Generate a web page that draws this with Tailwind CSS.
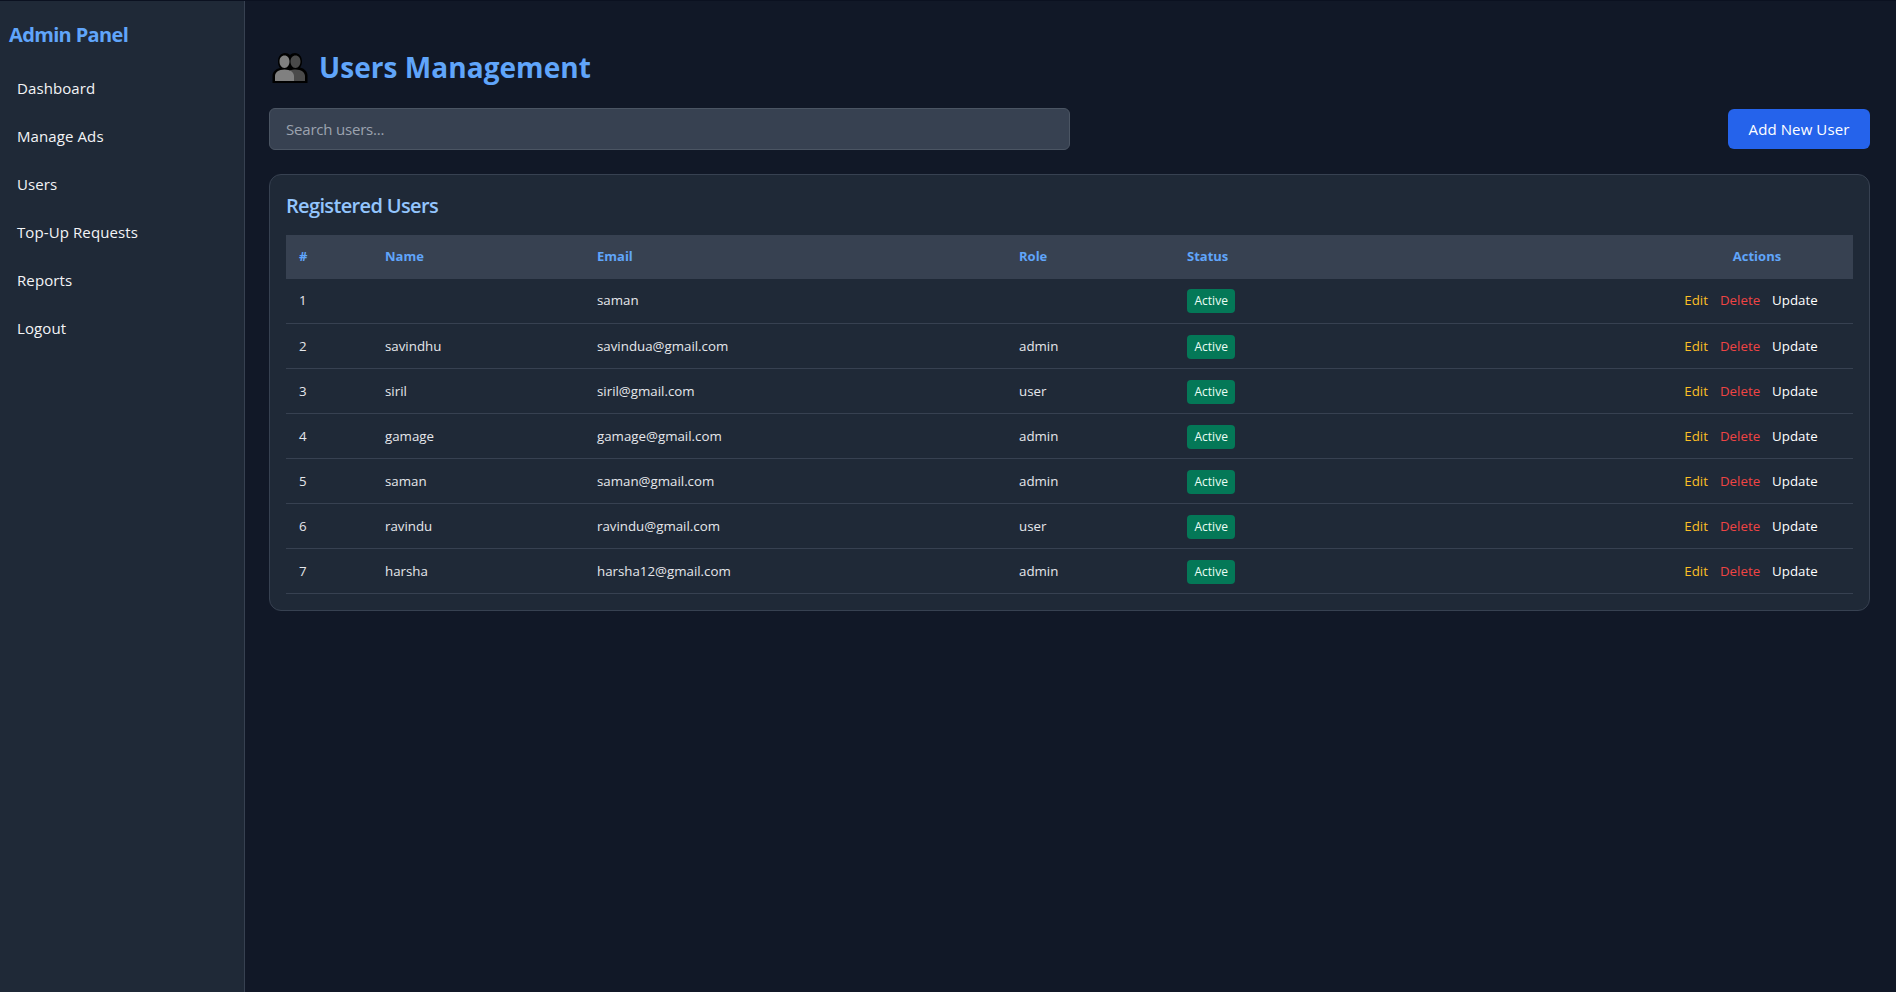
<!DOCTYPE html>
<html><head><meta charset="utf-8"><script src="https://cdn.jsdelivr.net/npm/@tailwindcss/browser@4"></script><title>Users Management</title></head>
<body class="bg-[#111827] font-['Open_Sans','Noto_Sans',sans-serif] text-white">
<div class="flex h-[992px] border-t border-[#0b1120]">
<aside class="w-[245px] shrink-0 bg-[#1f2937] border-r border-[#374151] px-[9px]">
<h2 class="mt-[20px] mb-[15px] text-xl leading-[28px] font-bold text-[#60a5fa] tracking-[-0.65px]">Admin Panel</h2>
<nav class="flex flex-col text-[15px] tracking-[0.1px] text-[#f3f4f6]">
<a class="px-2 py-3 leading-6">Dashboard</a>
<a class="px-2 py-3 leading-6">Manage Ads</a>
<a class="px-2 py-3 leading-6">Users</a>
<a class="px-2 py-3 leading-6">Top-Up Requests</a>
<a class="px-2 py-3 leading-6">Reports</a>
<a class="px-2 py-3 leading-6">Logout</a>
</nav>
</aside>
<main class="flex-1 pl-[24px] pr-[26px] pt-[46px]">
<h1 class="flex items-center gap-[11px] h-[40px] text-[28px] font-bold text-[#60a5fa] tracking-[0.05px]">
<svg class="ml-[3px] mt-[2px]" width="36" height="32" viewBox="0 0 36 32"><path d="M23 1c4 0 7 3.500 7 8.500 0 2.500-.8 4.500-2 6 4.500 1 7.500 4 7.500 8v7.500H.5V24c0-4 3-7 7.500-8-1.200-1.500-2-3.500-2-6.500C6 4.500 9 1 13 1c2 0 3.800.8 5 2 1.200-1.200 3-2 5-2z" fill="#000"/><path d="M23.500 3.500c3 0 5 2.600 5 6s-2 6.500-5 6.500-5-3-5-6.500 2-6 5-6zM18 18.300c1.500-.5 3.500-.8 5.500-.8 5.500 0 9.500 2.800 9.500 6.500v5H18z" fill="#4a4a4a"/><path d="M12.500 3.500c3 0 5 2.600 5 6s-2 6.500-5 6.500-5-3-5-6.500 2-6 5-6zM12.500 17.500c5.500 0 9.500 2.800 9.500 6.500v5H3v-5c0-3.700 4-6.500 9.500-6.500z" fill="#808080"/></svg>
<span>Users Management</span></h1>
<div class="flex justify-between items-center mt-[21px]">
<input placeholder="Search users..." class="w-[801px] h-[42px] px-4 rounded-md bg-[#374151] border border-[#4b5563] text-[15px] tracking-[-0.2px] placeholder:text-[#9ca3af]">
<button class="w-[142px] h-[40px] rounded-md bg-[#2563eb] text-[15px] font-medium tracking-[0.1px] text-white">Add New User</button>
</div>
<section class="mt-[24px] bg-[#1f2937] border border-[#374151] rounded-xl p-4">
<h2 class="text-[20px] leading-[28px] font-semibold text-[#93c5fd] tracking-[-0.65px] mt-[1px] mb-[15px]">Registered Users</h2>
<table class="w-full table-fixed text-[13.3px] text-[#e5e7eb]">
<colgroup><col class="w-[86px]"><col class="w-[212px]"><col class="w-[422px]"><col class="w-[168px]"><col class="w-[487px]"><col class="w-[192px]"></colgroup>
<thead class="bg-[#374151] text-[#60a5fa] text-left text-[13px]">
<tr class="h-[44px]"><th class="pl-[13px] font-bold">#</th><th class="pl-[13px] font-bold">Name</th><th class="pl-[13px] font-bold">Email</th><th class="pl-[13px] font-bold">Role</th><th class="pl-[13px] font-bold">Status</th><th class="px-3 font-bold text-center">Actions</th></tr>
</thead>
<tbody>
<tr class="h-[44px] border-b border-[#374151] [&_td]:pt-[1px]"><td class="pl-[13px]">1</td><td class="pl-[13px]"></td><td class="pl-[13px]">saman</td><td class="pl-[13px]"></td><td class="pl-[13px]"><span class="inline-block bg-[#047857] rounded px-[7.5px] leading-[24px] text-xs text-[#ecfdf5]">Active</span></td><td class="px-3 text-center"><a class="mr-3 text-[#fbbf24]">Edit</a><a class="mr-3 text-[#ef4444]">Delete</a><a class="mr-3 text-white">Update</a></td></tr>
<tr class="h-[45px] border-b border-[#374151] [&_td]:pt-[2px]"><td class="pl-[13px]">2</td><td class="pl-[13px]">savindhu</td><td class="pl-[13px]">savindua@gmail.com</td><td class="pl-[13px]">admin</td><td class="pl-[13px]"><span class="inline-block bg-[#047857] rounded px-[7.5px] leading-[24px] text-xs text-[#ecfdf5]">Active</span></td><td class="px-3 text-center"><a class="mr-3 text-[#fbbf24]">Edit</a><a class="mr-3 text-[#ef4444]">Delete</a><a class="mr-3 text-white">Update</a></td></tr>
<tr class="h-[45px] border-b border-[#374151] [&_td]:pt-[2px]"><td class="pl-[13px]">3</td><td class="pl-[13px]">siril</td><td class="pl-[13px]">siril@gmail.com</td><td class="pl-[13px]">user</td><td class="pl-[13px]"><span class="inline-block bg-[#047857] rounded px-[7.5px] leading-[24px] text-xs text-[#ecfdf5]">Active</span></td><td class="px-3 text-center"><a class="mr-3 text-[#fbbf24]">Edit</a><a class="mr-3 text-[#ef4444]">Delete</a><a class="mr-3 text-white">Update</a></td></tr>
<tr class="h-[45px] border-b border-[#374151] [&_td]:pt-[2px]"><td class="pl-[13px]">4</td><td class="pl-[13px]">gamage</td><td class="pl-[13px]">gamage@gmail.com</td><td class="pl-[13px]">admin</td><td class="pl-[13px]"><span class="inline-block bg-[#047857] rounded px-[7.5px] leading-[24px] text-xs text-[#ecfdf5]">Active</span></td><td class="px-3 text-center"><a class="mr-3 text-[#fbbf24]">Edit</a><a class="mr-3 text-[#ef4444]">Delete</a><a class="mr-3 text-white">Update</a></td></tr>
<tr class="h-[45px] border-b border-[#374151] [&_td]:pt-[2px]"><td class="pl-[13px]">5</td><td class="pl-[13px]">saman</td><td class="pl-[13px]">saman@gmail.com</td><td class="pl-[13px]">admin</td><td class="pl-[13px]"><span class="inline-block bg-[#047857] rounded px-[7.5px] leading-[24px] text-xs text-[#ecfdf5]">Active</span></td><td class="px-3 text-center"><a class="mr-3 text-[#fbbf24]">Edit</a><a class="mr-3 text-[#ef4444]">Delete</a><a class="mr-3 text-white">Update</a></td></tr>
<tr class="h-[45px] border-b border-[#374151] [&_td]:pt-[2px]"><td class="pl-[13px]">6</td><td class="pl-[13px]">ravindu</td><td class="pl-[13px]">ravindu@gmail.com</td><td class="pl-[13px]">user</td><td class="pl-[13px]"><span class="inline-block bg-[#047857] rounded px-[7.5px] leading-[24px] text-xs text-[#ecfdf5]">Active</span></td><td class="px-3 text-center"><a class="mr-3 text-[#fbbf24]">Edit</a><a class="mr-3 text-[#ef4444]">Delete</a><a class="mr-3 text-white">Update</a></td></tr>
<tr class="h-[45px] border-b border-[#374151] [&_td]:pt-[2px]"><td class="pl-[13px]">7</td><td class="pl-[13px]">harsha</td><td class="pl-[13px]">harsha12@gmail.com</td><td class="pl-[13px]">admin</td><td class="pl-[13px]"><span class="inline-block bg-[#047857] rounded px-[7.5px] leading-[24px] text-xs text-[#ecfdf5]">Active</span></td><td class="px-3 text-center"><a class="mr-3 text-[#fbbf24]">Edit</a><a class="mr-3 text-[#ef4444]">Delete</a><a class="mr-3 text-white">Update</a></td></tr>
</tbody></table>
</section>
</main></div>
</body></html>
